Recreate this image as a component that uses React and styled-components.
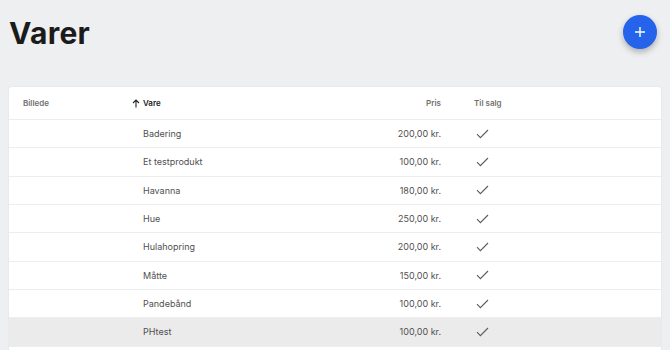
import React from 'react';
import styled, { createGlobalStyle } from 'styled-components';

const GlobalStyle = createGlobalStyle`
    html, body {
        margin: 0;
        padding: 0;
        background: #eeeff1;
        font-family: Inter, "Noto Sans", sans-serif;
        color: #1c1c1c;
    }
`;

const products = [
    { name: 'Badering', price: '200,00 kr.' },
    { name: 'Et testprodukt', price: '100,00 kr.' },
    { name: 'Havanna', price: '180,00 kr.' },
    { name: 'Hue', price: '250,00 kr.' },
    { name: 'Hulahopring', price: '200,00 kr.' },
    { name: 'Måtte', price: '150,00 kr.' },
    { name: 'Pandebånd', price: '100,00 kr.' },
    { name: 'PHtest', price: '100,00 kr.', hovered: true },
];

const Check = () => (
    <svg width="13" height="10" viewBox="0 0 13 10" fill="none">
        <path d="M1 5.2 L4.4 8.6 L12 1" stroke="#5c5c5c" strokeWidth="1.1" />
    </svg>
);

const ArrowUp = () => (
    <svg width="8" height="9" viewBox="0 0 8 9" fill="none">
        <path d="M4 8.5 V1 M1 4 L4 1 L7 4" stroke="#222" strokeWidth="1.1" />
    </svg>
);

const App = () => {
    return (
        <Page>
            <GlobalStyle />
            <Top>
                <Title>Varer</Title>
                <Fab aria-label="Tilføj">
                    <svg width="12" height="12" viewBox="0 0 12 12">
                        <path d="M6 1 V11 M1 6 H11" stroke="#fff" strokeWidth="1.4" />
                    </svg>
                </Fab>
            </Top>
            <Card>
                <HeadRow>
                    <HeadCell>Billede</HeadCell>
                    <HeadCell active>
                        <ArrowBox><ArrowUp /></ArrowBox>
                        Vare
                    </HeadCell>
                    <HeadCell right>Pris</HeadCell>
                    <HeadCell>Til salg</HeadCell>
                </HeadRow>
                {products.map((p) => (
                    <Row key={p.name} $hovered={p.hovered}>
                        <Cell />
                        <Cell>{p.name}</Cell>
                        <Cell right>{p.price}</Cell>
                        <Cell><Check /></Cell>
                    </Row>
                ))}
            </Card>
        </Page>
    );
};

const Page = styled.div`
    padding: 0 9px;
    height: 350px;
    overflow: hidden;
`;

const Top = styled.div`
    display: flex;
    justify-content: space-between;
    align-items: flex-start;
    height: 87px;
`;

const Title = styled.h1`
    margin: 15px 0 0 0;
    font-size: 30px;
    font-weight: 700;
    letter-spacing: 0.3px;
    color: #1b1b1b;
`;

const Fab = styled.button`
    margin: 15px 4px 0 0;
    width: 34px;
    height: 34px;
    border-radius: 50%;
    border: none;
    background: #2563eb;
    display: flex;
    align-items: center;
    justify-content: center;
    box-shadow: 0 3px 6px rgba(0, 0, 0, 0.28);
    padding: 0;
`;

const Card = styled.div`
    background: #fff;
    border-radius: 3px;
    box-shadow: 0 0 2px rgba(0, 0, 0, 0.08);
    padding-bottom: 30px;
`;

const grid = `
    display: grid;
    grid-template-columns: 120px 200px 98px 1fr;
    padding-left: 14px;
    align-items: center;
`;

const HeadRow = styled.div`
    ${grid}
    height: 32px;
    border-bottom: 1px solid #ededed;
`;

const HeadCell = styled.div`
    display: flex;
    align-items: center;
    justify-content: ${(p) => (p.right ? 'flex-end' : 'flex-start')};
    font-size: 8px;
    font-weight: 600;
    color: ${(p) => (p.active ? '#1a1a1a' : '#707070')};
    &:last-child {
        padding-left: 33px;
    }
`;

const ArrowBox = styled.span`
    display: inline-flex;
    margin-left: -11px;
    margin-right: 3px;
`;

const Row = styled.div`
    ${grid}
    height: 28.33px;
    box-sizing: border-box;
    border-bottom: 1px solid #ededed;
    background: ${(p) => (p.$hovered ? '#ebebeb' : '#fff')};
`;

const Cell = styled.div`
    font-size: 9px;
    color: #505050;
    display: flex;
    align-items: center;
    justify-content: ${(p) => (p.right ? 'flex-end' : 'flex-start')};
    &:last-child {
        padding-left: 35px;
    }
`;

export default App;
